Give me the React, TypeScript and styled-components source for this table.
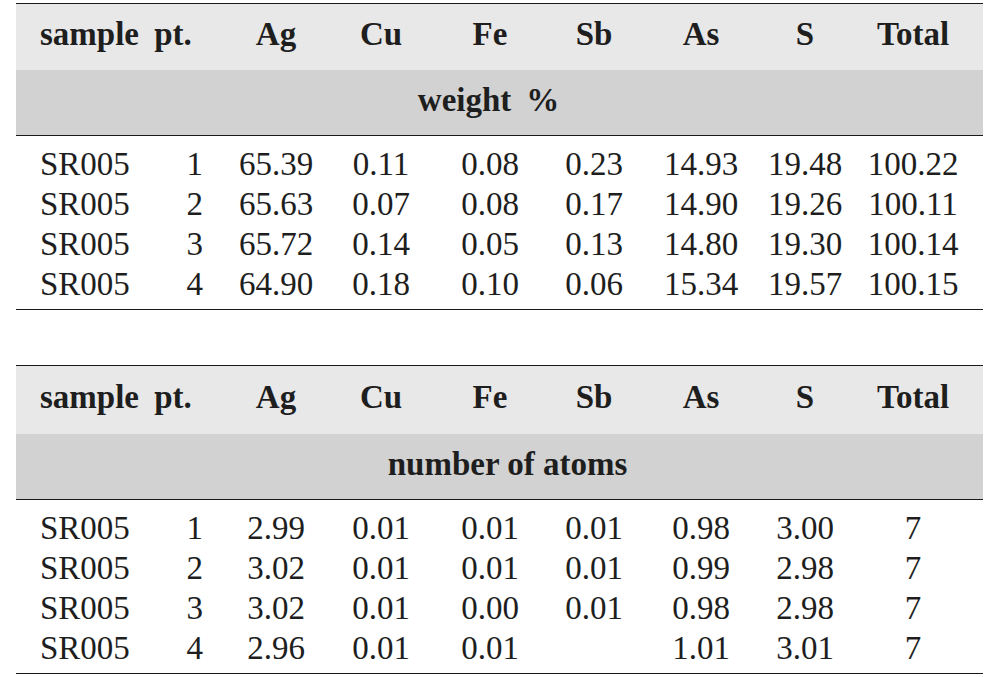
import styled, { createGlobalStyle } from "styled-components";

const GlobalStyle = createGlobalStyle`
  body {
    margin: 0;
    background: #ffffff;
  }
`;

const COLUMNS = "124px 72px 128px 82px 136px 72px 142px 66px 145px";

const Page = styled.div`
  padding: 3px 0 0 16px;
  width: 967px;
  font-family: "Liberation Serif", "Times New Roman", serif;
  font-size: 33px;
  color: #1e1e1e;
`;

const Table = styled.div<{ $gap?: number }>`
  border-top: 1px solid #1a1a1a;
  border-bottom: 1px solid #1a1a1a;
  margin-top: ${(p) => p.$gap ?? 0}px;
`;

const HeadRow = styled.div<{ $height: number }>`
  display: grid;
  grid-template-columns: ${COLUMNS};
  height: ${(p) => p.$height}px;
  background: #e8e8e8;
  font-weight: bold;
  padding-bottom: 6px;
  box-sizing: border-box;
`;

const Caption = styled.div<{ $shift: number }>`
  height: 66px;
  background: #d2d2d2;
  border-bottom: 1px solid #1a1a1a;
  display: flex;
  align-items: center;
  justify-content: center;
  font-weight: bold;
  padding-left: ${(p) => Math.max(p.$shift, 0) * 2}px;
  padding-right: ${(p) => Math.max(-p.$shift, 0) * 2}px;
  padding-bottom: 4px;
  box-sizing: border-box;
`;

const Body = styled.div`
  padding: 8px 0 5px;
`;

const Row = styled.div`
  display: grid;
  grid-template-columns: ${COLUMNS};
  height: 40px;
`;

const Cell = styled.div<{ $align?: "left" | "right" | "center"; $pad?: string }>`
  display: flex;
  align-items: center;
  justify-content: ${(p) =>
    p.$align === "left" ? "flex-start" : p.$align === "right" ? "flex-end" : "center"};
  padding: ${(p) => p.$pad ?? "0"};
  white-space: nowrap;
  line-height: 40px;
`;

const headers = ["sample", "pt.", "Ag", "Cu", "Fe", "Sb", "As", "S", "Total"];

const weight = [
  ["SR005", "1", "65.39", "0.11", "0.08", "0.23", "14.93", "19.48", "100.22"],
  ["SR005", "2", "65.63", "0.07", "0.08", "0.17", "14.90", "19.26", "100.11"],
  ["SR005", "3", "65.72", "0.14", "0.05", "0.13", "14.80", "19.30", "100.14"],
  ["SR005", "4", "64.90", "0.18", "0.10", "0.06", "15.34", "19.57", "100.15"],
];

const atoms = [
  ["SR005", "1", "2.99", "0.01", "0.01", "0.01", "0.98", "3.00", "7"],
  ["SR005", "2", "3.02", "0.01", "0.01", "0.01", "0.99", "2.98", "7"],
  ["SR005", "3", "3.02", "0.01", "0.00", "0.01", "0.98", "2.98", "7"],
  ["SR005", "4", "2.96", "0.01", "0.01", "", "1.01", "3.01", "7"],
];

const headPad = (i: number) => (i === 0 ? "0 0 0 24px" : i === 1 ? "0 6px 0 0" : i === 8 ? "0 0 0 5px" : "0");
const dataPad = (i: number) => (i === 0 ? "0 0 0 24px" : i === 1 ? "0 9px 0 0" : i === 8 ? "0 0 0 5px" : "0");

type Props = { caption: string; shift: number; rows: string[][]; gap?: number; headHeight: number };

const DataTable = ({ caption, shift, rows, gap, headHeight }: Props) => (
  <Table $gap={gap}>
    <HeadRow $height={headHeight}>
      {headers.map((h, i) => (
        <Cell key={h} $align={i === 0 ? "left" : "center"} $pad={headPad(i)}>
          {h}
        </Cell>
      ))}
    </HeadRow>
    <Caption $shift={shift}>{caption}</Caption>
    <Body>
      {rows.map((r, ri) => (
        <Row key={ri}>
          {r.map((v, i) => (
            <Cell key={i} $align={i === 0 ? "left" : i === 1 ? "right" : "center"} $pad={dataPad(i)}>
              {v}
            </Cell>
          ))}
        </Row>
      ))}
    </Body>
  </Table>
);

export default function App() {
  return (
    <>
      <GlobalStyle />
      <Page>
        <DataTable caption={"weight\u2009\u00a0%"} shift={-11} rows={weight} headHeight={66} />
        <DataTable caption="number of atoms" shift={8} rows={atoms} gap={55} headHeight={68} />
      </Page>
    </>
  );
}
